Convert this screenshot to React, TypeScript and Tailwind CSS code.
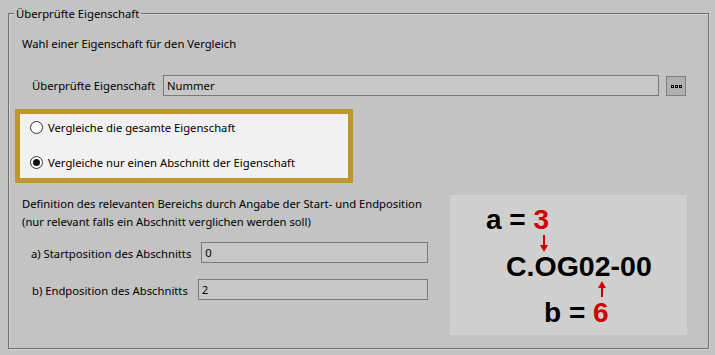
import React from 'react';

const Radio = ({ checked, label }: { checked?: boolean; label: string }) => (
  <label className="flex items-center h-[15px]">
    <span className="w-[13px] h-[13px] rounded-full border border-[#333] bg-white flex items-center justify-center shrink-0">
      {checked && <span className="w-[7px] h-[7px] rounded-full bg-[#111]" />}
    </span>
    <span className="ml-[5px] text-black">{label}</span>
  </label>
);

const Field = ({ value, className }: { value: string; className?: string }) => (
  <div className={`h-[21px] border border-[#7a7a7a] bg-[#c7c7c7] pl-[3px] flex items-center text-black ${className ?? ''}`}>
    {value}
  </div>
);

export default function App() {
  return (
    <div
      className="w-[715px] h-[355px] bg-[#c3c3c3] overflow-hidden text-[11.25px] leading-[15px] text-black"
      style={{ fontFamily: '"Noto Sans", "Open Sans", sans-serif' }}
    >
      {/* Group box */}
      <div className="relative mt-[13px] ml-[8px] w-[701px] h-[336px] border border-[#6f6f6f] shadow-[inset_1px_1px_0_#d6d6d6,1px_1px_0_#d6d6d6]">
        <span className="absolute left-[5px] top-[-8px] px-[2px] bg-[#c3c3c3]">Überprüfte Eigenschaft</span>

        <div className="pl-[13px] pt-[22px]">Wahl einer Eigenschaft für den Vergleich</div>

        {/* Property row */}
        <div className="flex items-start mt-[24px] ml-[23px] h-[21px]">
          <span className="h-[21px] flex items-center">Überprüfte Eigenschaft</span>
          <div className="flex-1" />
          <Field value="Nummer" className="w-[496px]" />
          <button className="ml-[7px] mt-[1px] w-[20px] h-[20px] bg-[#b0b0b0] border border-[#808080] flex items-center justify-center gap-[1px]">
            <span className="w-[3px] h-[3px] border border-black" />
            <span className="w-[3px] h-[3px] border border-black" />
            <span className="w-[3px] h-[3px] border border-black" />
          </button>
          <div className="w-[22px]" />
        </div>

        {/* Highlighted radio options */}
        <div className="mt-[13px] ml-[6px] w-[338px] h-[74px] border-[5px] border-[#bf952f] bg-[#f1f1f1] pl-[10px] pt-[6px] flex flex-col gap-[20px]">
          <Radio label="Vergleiche die gesamte Eigenschaft" />
          <Radio checked label="Vergleiche nur einen Abschnitt der Eigenschaft" />
        </div>

        {/* Bottom section */}
        <div className="flex mt-[12px]">
          <div className="ml-[13px] w-[406px]">
            <div className="leading-[18px]">
              Definition des relevanten Bereichs durch Angabe der Start- und Endposition
              <br />
              (nur relevant falls ein Abschnitt verglichen werden soll)
            </div>
            <div className="flex items-center mt-[11px] pl-[9px]">
              <span className="mt-[2px]">a) Startposition des Abschnitts</span>
              <Field value="0" className="flex-1 ml-[10px]" />
            </div>
            <div className="flex items-center mt-[16px] pl-[10px]">
              <span className="mt-[2px]">b) Endposition des Abschnitts</span>
              <Field value="2" className="flex-1 ml-[10px]" />
            </div>
          </div>

          {/* Example picture */}
          <div className="ml-[22px] w-[237px] h-[140px] bg-[#cfcfcf]">
            <svg width="237" height="140" viewBox="0 0 237 140" style={{ fontFamily: '"Liberation Sans", Arial, sans-serif', fontWeight: 700 }}>
              <text x="36" y="34" fontSize="28" fill="#000">
                a = <tspan fill="#d00000">3</tspan>
              </text>
              <line x1="94" y1="40" x2="94" y2="52" stroke="#d00000" strokeWidth="2" />
              <polygon points="90,50 98,50 94,57" fill="#d00000" />
              <text x="56" y="81" fontSize="28.5" fill="#000">C.OG02-00</text>
              <line x1="152" y1="91" x2="152" y2="102" stroke="#d00000" strokeWidth="2" />
              <polygon points="148,93 156,93 152,86" fill="#d00000" />
              <text x="94" y="127" fontSize="28" fill="#000">
                b = <tspan fill="#d00000">6</tspan>
              </text>
            </svg>
          </div>
        </div>
      </div>
    </div>
  );
}
